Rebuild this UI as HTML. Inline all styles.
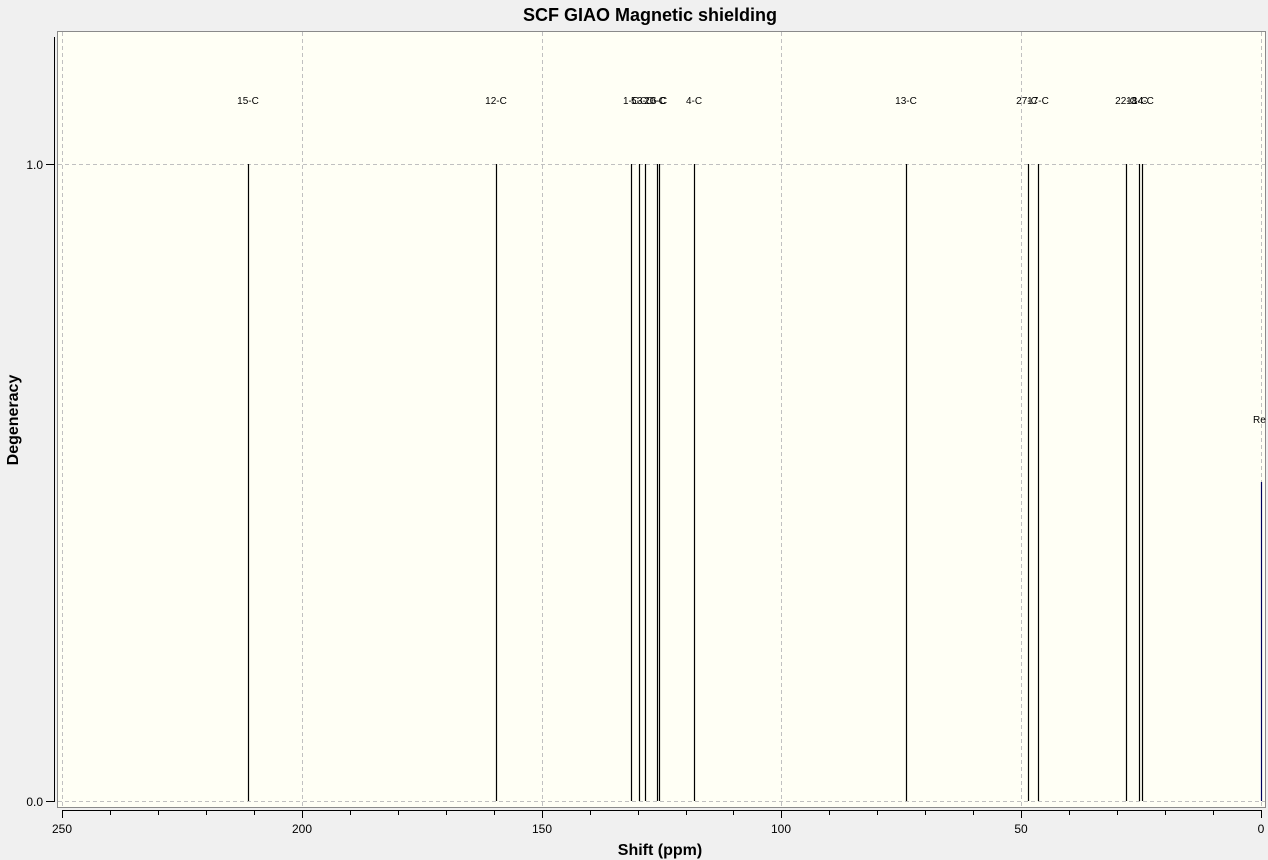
<!DOCTYPE html>
<html><head><meta charset="utf-8"><style>
html,body{margin:0;padding:0;background:#f0f0f0;}
svg{display:block;font-family:"Liberation Sans",Arial,sans-serif;}
</style></head><body>
<svg width="1268" height="860" viewBox="0 0 1268 860" xmlns="http://www.w3.org/2000/svg">
<rect width="1268" height="860" fill="#f0f0f0"/>
<text x="650" y="21" font-size="18" font-weight="bold" text-anchor="middle" fill="#000">SCF GIAO Magnetic shielding</text>
<rect x="57.5" y="31.5" width="1208" height="776" fill="#fffff5" stroke="#8a8a8a" stroke-width="1"/>
<g stroke="#c0c0c0" stroke-width="1" stroke-dasharray="4,3">
<line x1="62.5" y1="32" x2="62.5" y2="807"/>
<line x1="302.5" y1="32" x2="302.5" y2="807"/>
<line x1="542.5" y1="32" x2="542.5" y2="807"/>
<line x1="781.5" y1="32" x2="781.5" y2="807"/>
<line x1="1021.5" y1="32" x2="1021.5" y2="807"/>
<line x1="1261.5" y1="32" x2="1261.5" y2="807"/>
<line x1="58" y1="164.5" x2="1265" y2="164.5"/>
<line x1="58" y1="801.5" x2="1265" y2="801.5"/>
</g>
<!-- y axis -->
<g stroke="#000" stroke-width="1">
<line x1="54.5" y1="37" x2="54.5" y2="802"/>
<line x1="46" y1="164.5" x2="54" y2="164.5"/>
<line x1="46" y1="801.5" x2="54" y2="801.5"/>
<line x1="62" y1="810.5" x2="1262" y2="810.5"/>
<line x1="62.5" y1="810" x2="62.5" y2="818"/>
<line x1="302.5" y1="810" x2="302.5" y2="818"/>
<line x1="542.5" y1="810" x2="542.5" y2="818"/>
<line x1="781.5" y1="810" x2="781.5" y2="818"/>
<line x1="1021.5" y1="810" x2="1021.5" y2="818"/>
<line x1="1261.5" y1="810" x2="1261.5" y2="818"/>
<line x1="110.5" y1="810" x2="110.5" y2="815"/><line x1="158.5" y1="810" x2="158.5" y2="815"/><line x1="206.5" y1="810" x2="206.5" y2="815"/><line x1="254.5" y1="810" x2="254.5" y2="815"/>
<line x1="350.5" y1="810" x2="350.5" y2="815"/><line x1="398.5" y1="810" x2="398.5" y2="815"/><line x1="446.5" y1="810" x2="446.5" y2="815"/><line x1="494.5" y1="810" x2="494.5" y2="815"/>
<line x1="590.5" y1="810" x2="590.5" y2="815"/><line x1="638.5" y1="810" x2="638.5" y2="815"/><line x1="686.5" y1="810" x2="686.5" y2="815"/><line x1="733.5" y1="810" x2="733.5" y2="815"/>
<line x1="829.5" y1="810" x2="829.5" y2="815"/><line x1="877.5" y1="810" x2="877.5" y2="815"/><line x1="925.5" y1="810" x2="925.5" y2="815"/><line x1="973.5" y1="810" x2="973.5" y2="815"/>
<line x1="1069.5" y1="810" x2="1069.5" y2="815"/><line x1="1117.5" y1="810" x2="1117.5" y2="815"/><line x1="1165.5" y1="810" x2="1165.5" y2="815"/><line x1="1213.5" y1="810" x2="1213.5" y2="815"/>
</g>
<g font-size="12" fill="#000" text-anchor="end">
<text x="43" y="169">1.0</text>
<text x="43" y="806">0.0</text>
</g>
<g font-size="12" fill="#000" text-anchor="middle">
<text x="62" y="833">250</text><text x="302" y="833">200</text><text x="542" y="833">150</text>
<text x="781" y="833">100</text><text x="1021" y="833">50</text><text x="1261" y="833">0</text>
</g>
<text x="660" y="855" font-size="16" font-weight="bold" text-anchor="middle">Shift (ppm)</text>
<text transform="translate(18,420) rotate(-90)" font-size="16" font-weight="bold" text-anchor="middle">Degeneracy</text>
<!-- peaks -->
<g stroke="#000" stroke-width="1.2">
<line x1="248.5" y1="164" x2="248.5" y2="801"/>
<line x1="496.5" y1="164" x2="496.5" y2="801"/>
<line x1="631.5" y1="164" x2="631.5" y2="801"/>
<line x1="639.5" y1="164" x2="639.5" y2="801"/>
<line x1="645.5" y1="164" x2="645.5" y2="801"/>
<line x1="657.5" y1="164" x2="657.5" y2="801"/>
<line x1="659.5" y1="164" x2="659.5" y2="801"/>
<line x1="694.5" y1="164" x2="694.5" y2="801"/>
<line x1="906.5" y1="164" x2="906.5" y2="801"/>
<line x1="1028.5" y1="164" x2="1028.5" y2="801"/>
<line x1="1038.5" y1="164" x2="1038.5" y2="801"/>
<line x1="1126.5" y1="164" x2="1126.5" y2="801"/>
<line x1="1139.5" y1="164" x2="1139.5" y2="801"/>
<line x1="1142.5" y1="164" x2="1142.5" y2="801"/>
</g>
<line x1="1261.5" y1="482" x2="1261.5" y2="801" stroke="#000060" stroke-width="1.2"/>
<g font-size="10" fill="#000" text-anchor="middle">
<text x="248" y="104">15-C</text>
<text x="496" y="104">12-C</text>
<text x="631" y="104">1-C</text>
<text x="639" y="104">5-C</text>
<text x="645" y="104">3-C</text>
<text x="655" y="104">20-C</text>
<text x="659" y="104">6-C</text>
<text x="694" y="104">4-C</text>
<text x="906" y="104">13-C</text>
<text x="1027" y="104">27-C</text>
<text x="1038" y="104">17-C</text>
<text x="1126" y="104">22-C</text>
<text x="1137" y="104">18-C</text>
<text x="1143" y="104">14-C</text>
<text x="1253" y="423" text-anchor="start">Re</text>
</g>
<rect x="1266" y="0" width="2" height="860" fill="#f0f0f0"/>
</svg>
</body></html>
